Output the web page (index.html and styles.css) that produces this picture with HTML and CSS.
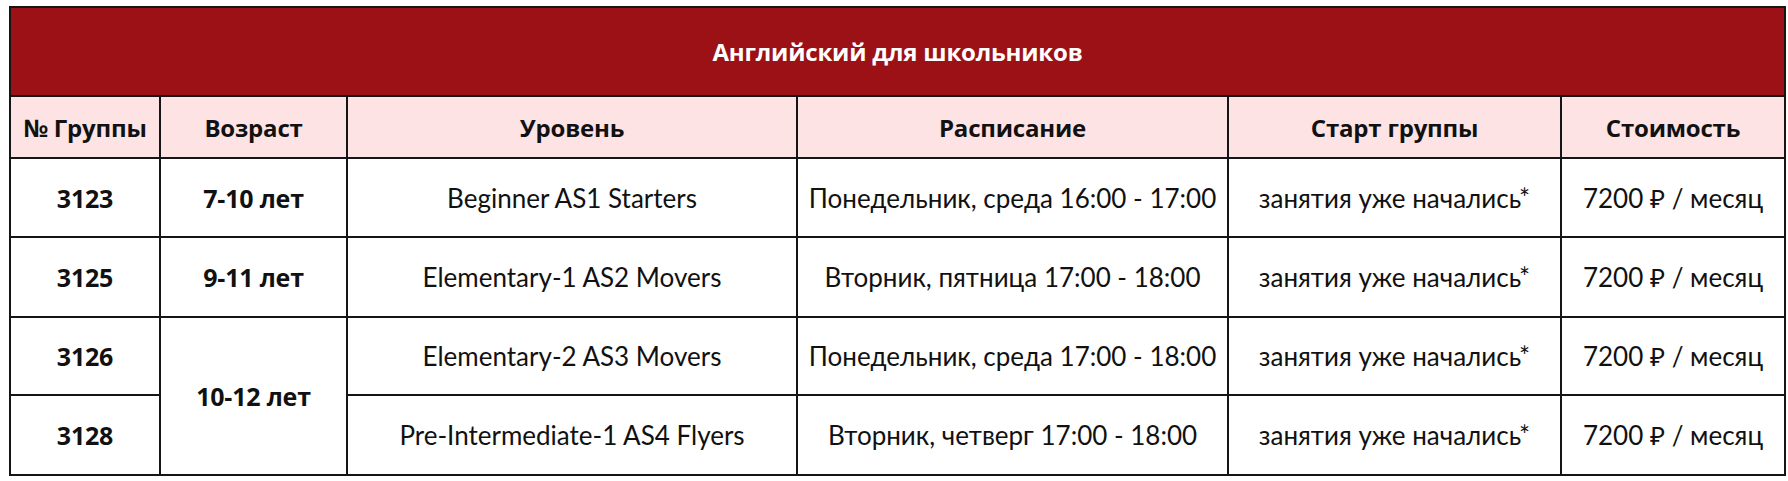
FILE: index.html
```html
<!DOCTYPE html>
<html lang="ru">
<head>
<meta charset="utf-8">
<title>Английский для школьников</title>
<link rel="stylesheet" href="styles.css">
</head>
<body>
<div class="wrap">
<table class="schedule">
  <colgroup>
    <col class="c-num">
    <col class="c-age">
    <col class="c-level">
    <col class="c-time">
    <col class="c-start">
    <col class="c-price">
  </colgroup>
  <thead>
    <tr class="r-title"><th colspan="6" class="title">Английский для школьников</th></tr>
    <tr class="r-head">
      <th>№ Группы</th>
      <th>Возраст</th>
      <th>Уровень</th>
      <th>Расписание</th>
      <th>Старт группы</th>
      <th>Стоимость</th>
    </tr>
  </thead>
  <tbody>
    <tr class="r1">
      <td class="b">3123</td>
      <td class="b">7-10 лет</td>
      <td>Beginner AS1 Starters</td>
      <td>Понедельник, среда 16:00 - 17:00</td>
      <td>занятия уже начались*</td>
      <td>7200 ₽ / месяц</td>
    </tr>
    <tr class="r2">
      <td class="b">3125</td>
      <td class="b">9-11 лет</td>
      <td>Elementary-1 AS2 Movers</td>
      <td>Вторник, пятница 17:00 - 18:00</td>
      <td>занятия уже начались*</td>
      <td>7200 ₽ / месяц</td>
    </tr>
    <tr class="r3">
      <td class="b">3126</td>
      <td class="b" rowspan="2">10-12 лет</td>
      <td>Elementary-2 AS3 Movers</td>
      <td>Понедельник, среда 17:00 - 18:00</td>
      <td>занятия уже начались*</td>
      <td>7200 ₽ / месяц</td>
    </tr>
    <tr class="r4">
      <td class="b">3128</td>
      <td>Pre-Intermediate-1 AS4 Flyers</td>
      <td>Вторник, четверг 17:00 - 18:00</td>
      <td>занятия уже начались*</td>
      <td>7200 ₽ / месяц</td>
    </tr>
  </tbody>
</table>
</div>
</body>
</html>
```

FILE: styles.css
```css
html, body {
  margin: 0;
  padding: 0;
  background: #ffffff;
}

.wrap {
  padding: 6px 0 0 9px;
}

.schedule {
  border-collapse: collapse;
  table-layout: fixed;
  width: 1775px;
  font-family: "Lato", "Noto Sans", sans-serif;
  color: #111111;
}

.c-num { width: 150px; }
.c-age { width: 187px; }
.c-level { width: 450px; }
.c-time { width: 431px; }
.c-start { width: 333px; }
.c-price { width: 224px; }

.schedule th,
.schedule td {
  border: 2px solid #151515;
  text-align: center;
  vertical-align: middle;
  padding: 0;
  white-space: nowrap;
}

.schedule td {
  font-size: 26px;
  font-weight: 400;
}

.schedule td.b,
.schedule th {
  font-family: "Open Sans", "Lato", sans-serif;
  font-weight: 700;
  letter-spacing: -0.2px;
}

.schedule td.b {
  font-size: 25px;
}

.r-title { height: 89px; }
.r-head { height: 62px; }
.r1 { height: 79px; }
.r2 { height: 80px; }
.r3 { height: 78px; }
.r4 { height: 80px; }

.title {
  background: #9b1115;
  color: #ffffff;
  font-size: 24px;
}

.r-head th {
  background: #fde3e4;
  font-size: 24px;
}
```
